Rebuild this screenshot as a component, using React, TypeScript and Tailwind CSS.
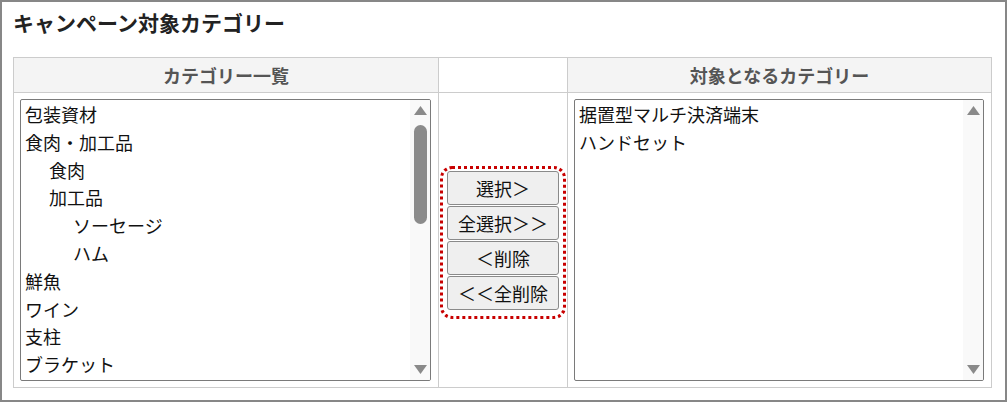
const FONT = '"Noto Sans CJK JP", "Noto Sans", sans-serif';

type Item = { label: string; level: number };

const categories: Item[] = [
  { label: "包装資材", level: 0 },
  { label: "食肉・加工品", level: 0 },
  { label: "食肉", level: 1 },
  { label: "加工品", level: 1 },
  { label: "ソーセージ", level: 2 },
  { label: "ハム", level: 2 },
  { label: "鮮魚", level: 0 },
  { label: "ワイン", level: 0 },
  { label: "支柱", level: 0 },
  { label: "ブラケット", level: 0 },
];

const targets: Item[] = [
  { label: "据置型マルチ決済端末", level: 0 },
  { label: "ハンドセット", level: 0 },
];

const indent = ["pl-[4px]", "pl-[28px]", "pl-[52px]"];

function ArrowUp() {
  return (
    <svg width="13" height="9" viewBox="0 0 13 9" className="block">
      <path d="M6.5 0 L13 9 L0 9 Z" fill="#8a8a8a" />
    </svg>
  );
}

function ArrowDown() {
  return (
    <svg width="13" height="9" viewBox="0 0 13 9" className="block">
      <path d="M0 0 L13 0 L6.5 9 Z" fill="#8a8a8a" />
    </svg>
  );
}

function ListBox({ items, width, thumb }: { items: Item[]; width: string; thumb: boolean }) {
  return (
    <div className={`${width} h-[282px] flex border border-[#7a7a7a] rounded-[2px] bg-white overflow-hidden`}>
      <div className="flex-1 overflow-hidden pt-[1px]">
        {items.map((it) => (
          <div
            key={it.label}
            className={`${indent[it.level]} h-[27.8px] leading-[27.8px] text-[18px] text-[#111] whitespace-nowrap`}
          >
            {it.label}
          </div>
        ))}
      </div>
      <div className="w-[20px] bg-[#f9f9f9] flex flex-col items-center pt-[6px] pb-[6px]">
        <ArrowUp />
        {thumb ? (
          <div className="mt-[10px] w-[13px] h-[99px] rounded-full bg-[#8b8b8b]" />
        ) : null}
        <div className="flex-1" />
        <ArrowDown />
      </div>
    </div>
  );
}

function Btn({ children }: { children: string }) {
  return (
    <button className="w-[112px] h-[34px] bg-[#efefef] border border-[#8a8a8a] rounded-[3px] text-[18px] leading-none text-[#111] flex items-center justify-center">
      {children}
    </button>
  );
}

export default function App() {
  return (
    <div
      className="w-[1007px] h-[402px] border-2 border-[#878787] bg-white pl-[11px] pt-[5px]"
      style={{ fontFamily: FONT }}
    >
      <h1 className="text-[21px] leading-[30px] font-bold text-[#222]">キャンペーン対象カテゴリー</h1>
      <div className="mt-[20px] w-[979px] grid grid-cols-[425px_129px_424px] border-l border-t border-[#cccccc]">
        <div className="h-[35px] bg-[#f4f4f4] border-r border-b border-[#cccccc] flex items-center justify-center text-[18px] font-bold text-[#555]">
          カテゴリー一覧
        </div>
        <div className="h-[35px] bg-white border-r border-b border-[#cccccc]" />
        <div className="h-[35px] bg-[#f4f4f4] border-r border-b border-[#cccccc] flex items-center justify-center text-[18px] font-bold text-[#555]">
          対象となるカテゴリー
        </div>

        <div className="h-[295px] border-r border-b border-[#cccccc] pl-[6px] pt-[6px]">
          <ListBox items={categories} width="w-[411px]" thumb />
        </div>
        <div className="h-[295px] border-r border-b border-[#cccccc] flex flex-col items-center pt-[73px]">
          <div className="w-[126px] border-[3px] border-dotted border-[#c80000] rounded-[12px] flex flex-col items-center gap-[1px] pt-[2px] pb-[6px]">
            <Btn>選択＞</Btn>
            <Btn>全選択＞＞</Btn>
            <Btn>＜削除</Btn>
            <Btn>＜＜全削除</Btn>
          </div>
        </div>
        <div className="h-[295px] border-r border-b border-[#cccccc] pl-[6px] pt-[6px]">
          <ListBox items={targets} width="w-[410px]" thumb={false} />
        </div>
      </div>
    </div>
  );
}
